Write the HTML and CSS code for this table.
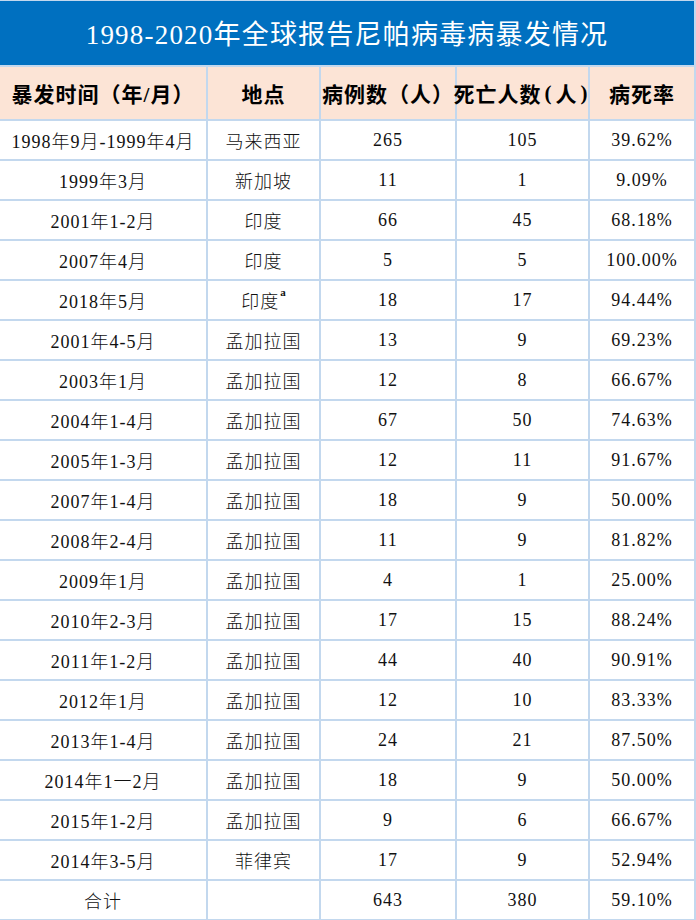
FILE: index.html
```html
<!DOCTYPE html>
<html lang="zh-CN">
<head>
<meta charset="utf-8">
<title>1998-2020年全球报告尼帕病毒病暴发情况</title>
<link rel="stylesheet" href="styles.css">
</head>
<body>
<div class="sheet">
  <div class="title">1998-2020年全球报告尼帕病毒病暴发情况</div>

  <div class="cell head">暴发时间（年/月）</div>
  <div class="cell head">地点</div>
  <div class="cell head">病例数（人）</div>
  <div class="cell head">死亡人数<span class="hp">(</span>人<span class="hp">)</span></div>
  <div class="cell head">病死率</div>

  <div class="cell">1998年9月-1999年4月</div><div class="cell">马来西亚</div><div class="cell">265</div><div class="cell">105</div><div class="cell">39.62%</div>
  <div class="cell">1999年3月</div><div class="cell">新加坡</div><div class="cell">11</div><div class="cell">1</div><div class="cell">9.09%</div>
  <div class="cell">2001年1-2月</div><div class="cell">印度</div><div class="cell">66</div><div class="cell">45</div><div class="cell">68.18%</div>
  <div class="cell">2007年4月</div><div class="cell">印度</div><div class="cell">5</div><div class="cell">5</div><div class="cell">100.00%</div>
  <div class="cell">2018年5月</div><div class="cell">印度<sup class="note">a</sup></div><div class="cell">18</div><div class="cell">17</div><div class="cell">94.44%</div>
  <div class="cell">2001年4-5月</div><div class="cell">孟加拉国</div><div class="cell">13</div><div class="cell">9</div><div class="cell">69.23%</div>
  <div class="cell">2003年1月</div><div class="cell">孟加拉国</div><div class="cell">12</div><div class="cell">8</div><div class="cell">66.67%</div>
  <div class="cell">2004年1-4月</div><div class="cell">孟加拉国</div><div class="cell">67</div><div class="cell">50</div><div class="cell">74.63%</div>
  <div class="cell">2005年1-3月</div><div class="cell">孟加拉国</div><div class="cell">12</div><div class="cell">11</div><div class="cell">91.67%</div>
  <div class="cell">2007年1-4月</div><div class="cell">孟加拉国</div><div class="cell">18</div><div class="cell">9</div><div class="cell">50.00%</div>
  <div class="cell">2008年2-4月</div><div class="cell">孟加拉国</div><div class="cell">11</div><div class="cell">9</div><div class="cell">81.82%</div>
  <div class="cell">2009年1月</div><div class="cell">孟加拉国</div><div class="cell">4</div><div class="cell">1</div><div class="cell">25.00%</div>
  <div class="cell">2010年2-3月</div><div class="cell">孟加拉国</div><div class="cell">17</div><div class="cell">15</div><div class="cell">88.24%</div>
  <div class="cell">2011年1-2月</div><div class="cell">孟加拉国</div><div class="cell">44</div><div class="cell">40</div><div class="cell">90.91%</div>
  <div class="cell">2012年1月</div><div class="cell">孟加拉国</div><div class="cell">12</div><div class="cell">10</div><div class="cell">83.33%</div>
  <div class="cell">2013年1-4月</div><div class="cell">孟加拉国</div><div class="cell">24</div><div class="cell">21</div><div class="cell">87.50%</div>
  <div class="cell">2014年1一2月</div><div class="cell">孟加拉国</div><div class="cell">18</div><div class="cell">9</div><div class="cell">50.00%</div>
  <div class="cell">2015年1-2月</div><div class="cell">孟加拉国</div><div class="cell">9</div><div class="cell">6</div><div class="cell">66.67%</div>
  <div class="cell">2014年3-5月</div><div class="cell">菲律宾</div><div class="cell">17</div><div class="cell">9</div><div class="cell">52.94%</div>
  <div class="cell">合计</div><div class="cell"></div><div class="cell">643</div><div class="cell">380</div><div class="cell">59.10%</div>
</div>
</body>
</html>
```

FILE: styles.css
```css
html, body {
  margin: 0;
  padding: 0;
  background: #ffffff;
}

body {
  font-family: "Liberation Serif", "Noto Sans CJK SC", serif;
  color: #111111;
}

.sheet {
  display: grid;
  grid-template-columns: 206px 111px 134px 131px 104px;
  grid-template-rows: 64px 52px repeat(20, 38px);
  gap: 2px;
  padding: 1px 2px 1px 0;
  width: 696px;
  height: 920px;
  box-sizing: border-box;
  background: #c3d8ee;
}

.title {
  grid-column: 1 / -1;
  background: #0070c0;
  color: #ffffff;
  font-size: 27px;
  display: flex;
  align-items: center;
  justify-content: center;
  padding-bottom: 2px;
  letter-spacing: 1.2px;
}

.cell {
  background: #ffffff;
  display: flex;
  align-items: center;
  justify-content: center;
  font-size: 18px;
  font-weight: 300;
  white-space: nowrap;
  letter-spacing: 1px;
}

.head {
  background: #fce4d6;
  font-size: 21px;
  font-weight: 700;
  color: #000000;
}

.hp {
  padding: 0 3px;
}

.note {
  font-size: 11px;
  font-weight: 700;
  align-self: flex-start;
  margin-top: 6px;
  margin-left: 1px;
  line-height: 1;
  letter-spacing: 0;
}
```
